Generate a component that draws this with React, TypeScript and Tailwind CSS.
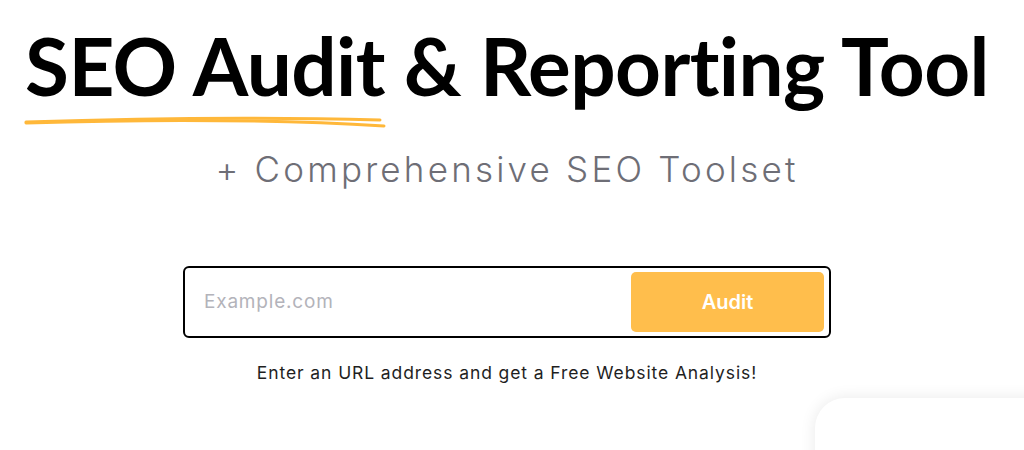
import React from 'react';

const Underline = () => (
  <svg width="364" height="16" viewBox="0 0 364 16" fill="none" className="block">
    <path d="M2 8 C 120 4, 250 3, 356 6" stroke="#ffb83a" strokeWidth="3" strokeLinecap="round" />
    <path d="M2 9 C 130 5, 260 6, 360 12" stroke="#ffb83a" strokeWidth="3" strokeLinecap="round" />
  </svg>
);

const App = () => {
  const [url, setUrl] = React.useState('');

  return (
    <div className="relative w-[1024px] h-[450px] overflow-hidden bg-white font-['Inter',sans-serif]">
      <div className="flex flex-col items-center pt-[20px] pr-[10px]">
        <div className="flex flex-col">
          <h1 className="font-['Lato',sans-serif] text-[80px] leading-[90px] font-bold tracking-[-0.6px] text-black whitespace-nowrap">
            SEO Audit &amp; Reporting Tool
          </h1>
          <div className="mt-[4px] -ml-[1px]">
            <Underline />
          </div>
        </div>
        <p className="mt-[17px] text-[35px] leading-[44px] font-light tracking-[3.2px] text-[#6e6e76]">
          + Comprehensive SEO Toolset
        </p>

        <div className="mt-[75px] w-[648px] h-[72px] border-2 border-black rounded-[6px] flex items-center pl-[19px] pr-[5px]">
          <input
            value={url}
            onChange={e => setUrl(e.target.value)}
            placeholder="Example.com"
            className="flex-1 text-[19px] tracking-[0.8px] text-black placeholder:text-[#b3b3ba] outline-none bg-transparent"
          />
          <button className="w-[193px] h-[60px] rounded-[5px] bg-[#ffbe4c] text-white text-[20px] font-semibold">
            Audit
          </button>
        </div>
        <p className="mt-[22px] text-[17.5px] tracking-[0.9px] text-[#1f1f1f]">
          Enter an URL address and get a Free Website Analysis!
        </p>
      </div>

      <div className="absolute left-[815px] top-[398px] w-[260px] h-[120px] bg-white rounded-[30px] shadow-[0_0_16px_rgba(0,0,0,0.09)]" />
    </div>
  );
};

export default App;
